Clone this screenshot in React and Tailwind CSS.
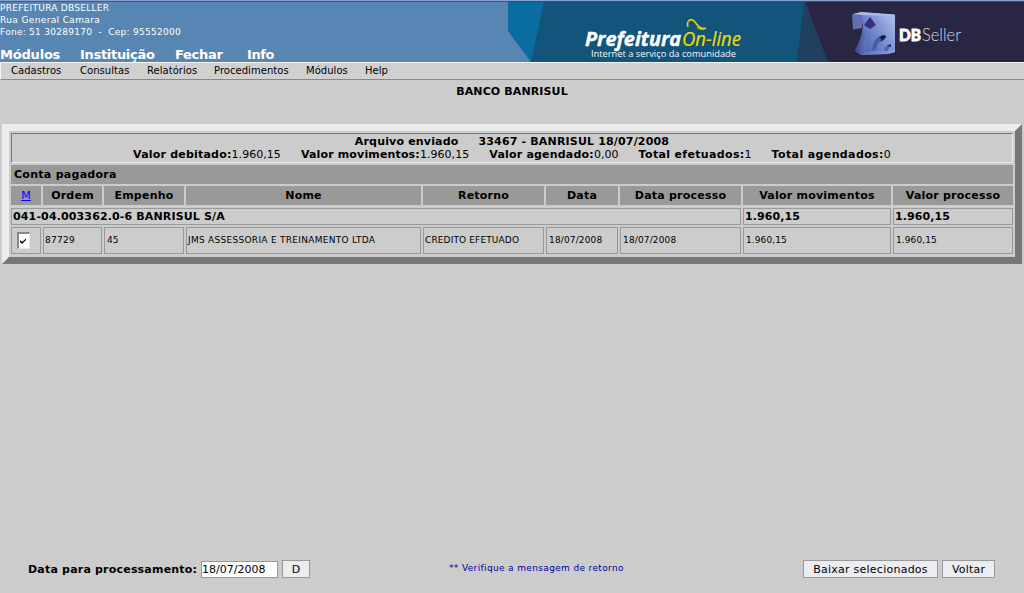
const Header = () => (
  <header className="flex h-[62px] w-full bg-[#5786b2] border-t border-[#8aa0d0]">
    <div className="flex w-[508px] flex-col border-t border-[#43558c] text-white">
      <div className="h-[45px] shrink-0 text-[9px] leading-[12px]">
        <p className="tracking-[0.27px]">PREFEITURA DBSELLER</p>
        <p className="tracking-[0.37px]">Rua General Camara</p>
        <p className="whitespace-pre tracking-[0.27px]">Fone: 51 30289170  -  Cep: 95552000</p>
      </div>
      <nav className="flex h-[15px] text-[13px] font-bold leading-[16px] tracking-[-0.1px]">
        <span className="w-[80px] tracking-[-0.2px]">Módulos</span>
        <span className="w-[95px] tracking-[-0.3px]">Instituição</span>
        <span className="w-[72px] tracking-[-0.3px]">Fechar</span>
        <span className="tracking-[-0.4px]">Info</span>
      </nav>
    </div>
    <svg width="516" height="61" viewBox="508 1 516 61" className="block">
      <rect x="508" y="1" width="516" height="61" fill="#13547b" />
      <path d="M508 1H544L531 62L508 31Z" fill="#096e9f" />
      <path d="M508 31L531 62H508Z" fill="#5786b2" />
      <path d="M805 1H1024V62H797Z" fill="#282643" />
      <path d="M805 1L828 62H797Z" fill="#21405f" />
      <path d="M508 1.5H1024" stroke="#43456c" />
      <text x="585" y="45.500" fontFamily="Open Sans" fontSize="20" fontWeight="700" fontStyle="italic" fill="#fff" stroke="#fff" strokeWidth="0.400" textLength="96" lengthAdjust="spacingAndGlyphs">Prefeitura</text>
      <text x="682" y="45.500" fontFamily="Open Sans" fontSize="20.500" fontStyle="italic" fill="#f0dc00" stroke="#f0dc00" strokeWidth="0.200" textLength="59" lengthAdjust="spacingAndGlyphs">On-line</text>
      <path d="M688 27C686 21 691 17 695 22C699 28 702 30 706 28" fill="none" stroke="#e8d500" strokeWidth="1.600" />
      <path d="M697 27.500Q701 31 706 28.500" fill="none" stroke="#e8d500" strokeWidth="1" />
      <text x="591" y="56.500" fontFamily="Open Sans" fontSize="9.500" fontWeight="500" fill="#f4f8fb" textLength="145" lengthAdjust="spacingAndGlyphs">Internet a serviço da comunidade</text>
      <defs>
        <linearGradient id="front" x1="0" x2="1" y1="0.9" y2="0.2">
          <stop offset="0" stopColor="#4354a6" />
          <stop offset="0.5" stopColor="#6f83cb" />
          <stop offset="1" stopColor="#a9baea" />
        </linearGradient>
        <linearGradient id="side" x1="0" x2="1">
          <stop offset="0" stopColor="#3c468a" />
          <stop offset="1" stopColor="#6679c4" />
        </linearGradient>
        <linearGradient id="base" x1="0" x2="1">
          <stop offset="0" stopColor="#5a6cba" />
          <stop offset="1" stopColor="#8ea2dc" />
        </linearGradient>
      </defs>
      <path d="M861 12L895 15V52L888 54L861 55L855 51Q861 40 863 28Z" fill="url(#front)" />
      <path d="M852 14.500L862 12V28L853 29.500Z" fill="#626fb5" />
      <path d="M853 14L861 12L895 14.500V16L862 15Z" fill="#aebbe8" />
      <path d="M862 28L867 37L865 54L861 55L855 50Q863 38 862 28Z" fill="url(#side)" />
      <path d="M865 52L895 50V52L888 54L861 55Z" fill="url(#base)" />
      <path d="M870 17L876 25L870 29L864 25Z" fill="#35307c" />
      <path d="M872 50Q873 37 883 35L886 36Q877 42 876 50Z" fill="#4b5ca6" />
      <path d="M879 38Q882 34 886 36Q886 39 880 42Q883 38 879 38Z" fill="#191b43" />
      <path d="M884 51Q885 45 891 44Q888 47 888 51Z" fill="#5565ad" />
      <path d="M887 46L891 44V47Z" fill="#252854" />
      <text x="899" y="41" fontFamily="Lato" fontSize="17.500" fontWeight="900" fill="#fff" stroke="#fff" strokeWidth="0.800" textLength="22" lengthAdjust="spacingAndGlyphs">DB</text>
      <text x="922" y="41" fontFamily="Lato" fontSize="18" fontWeight="300" fill="#d5d7e8" textLength="39" lengthAdjust="spacingAndGlyphs">Seller</text>
    </svg>
  </header>
);

const menus = [
  ["Cadastros", "w-[69px]"],
  ["Consultas", "w-[67px]"],
  ["Relatórios", "w-[67px]"],
  ["Procedimentos", "w-[92px]"],
  ["Módulos", "w-[59px]"],
  ["Help", ""],
];

const columns = ["M", "Ordem", "Empenho", "Nome", "Retorno", "Data", "Data processo", "Valor movimentos", "Valor processo"];
const record = [
  ["87729", "pl-px tracking-[0.3px]"],
  ["45", "pl-[2px]"],
  ["JMS ASSESSORIA E TREINAMENTO LTDA", "pl-px tracking-[0.28px]"],
  ["CREDITO EFETUADO", "pl-px tracking-[0.13px]"],
  ["18/07/2008", "pl-[2px] tracking-[0.15px]"],
  ["18/07/2008", "pl-[2px] tracking-[0.15px]"],
  ["1.960,15", "pl-[2px] tracking-[0.1px]"],
  ["1.960,15", "pl-[2px] tracking-[0.1px]"],
];
const totals = [
  ["Valor debitado:", "1.960,15", "tracking-[0.2px]"],
  ["Valor movimentos:", "1.960,15", "tracking-[0.15px]"],
  ["Valor agendado:", "0,00", "tracking-[0.2px]"],
  ["Total efetuados:", "1", "tracking-[0.34px]"],
  ["Total agendados:", "0", "tracking-[0.38px]"],
];
const grid = "grid grid-cols-[30px_59px_80px_235px_121px_72px_121px_148px_120px] gap-x-[2px]";

const Button = ({ children, size }) => (
  <button className={`${size} h-[18px] border border-[#999] bg-[#ebedf2] pt-px leading-[15px]`}>{children}</button>
);

export default function App() {
  return (
    <div className="flex h-[593px] w-[1024px] flex-col overflow-hidden whitespace-nowrap bg-[#ccc] font-['DejaVu_Sans',sans-serif] text-[11px] leading-[13px] text-black">
      <Header />
      <nav className="flex h-[18px] border-y border-l border-t-[#f4f4f4] border-l-[#f4f4f4] border-b-[#888] bg-[#d0d0d0] pl-[10px] text-[10px] leading-[16px] tracking-[0.04px]">
        {menus.map(([name, width]) => (
          <span key={name} className={width}>{name}</span>
        ))}
      </nav>
      <h1 className="h-[44px] pt-[5px] text-center text-[11px] font-bold tracking-[0.12px]">BANCO BANRISUL</h1>

      <section className="mx-[2px] h-[140px] border-[7px] border-t-[#ececec] border-l-[#ececec] border-r-[#777] border-b-[#777] p-[2px]">
        <div className="h-[30px] border border-t-[#777] border-l-[#777] border-r-[#ececec] border-b-[#ececec] pt-px">
          <p className="whitespace-pre text-center font-bold tracking-[0.17px]">
            Arquivo enviado<span className="ml-[20px]">33467 - BANRISUL 18/07/2008</span>
          </p>
          <p className="flex justify-center gap-[20px]">
            {totals.map(([label, value, tracking]) => (
              <span key={label} className="tracking-[0.05px]"><b className={tracking}>{label}</b>{value}</span>
            ))}
          </p>
        </div>
        <div className="mt-[2px] h-[19px] bg-[#999] pl-[3px] font-bold leading-[19px] tracking-[0.28px]">Conta pagadora</div>
        <div className={`${grid} mt-[2px] h-[19px] text-center font-bold leading-[19px] tracking-[0.22px]`}>
          {columns.map((name, i) => (
            <div key={name} className="bg-[#999]">
              {i === 0 ? <a href="#" className="font-normal text-[#00f] underline">{name}</a> : name}
            </div>
          ))}
        </div>
        <div className={`${grid} mt-[3px] h-[17px] font-bold leading-[15px]`}>
          <div className="col-span-7 border border-[#999] pl-px tracking-[0.14px]">041-04.003362.0-6 BANRISUL S/A</div>
          <div className="border border-[#999] pl-px tracking-[0.08px]">1.960,15</div>
          <div className="border border-[#999] pl-px tracking-[0.08px]">1.960,15</div>
        </div>
        <div className={`${grid} mt-[2px] h-[27px] text-[9px] leading-[24px]`}>
          <div className="border border-[#999] pt-[4px] pl-[5px]">
            <div className="h-[17px] w-[13px] border-t-2 border-l-2 border-r border-b border-t-[#888] border-l-[#888] border-r-[#e8e8e8] border-b-[#e8e8e8] bg-white">
              <svg width="10" height="14" viewBox="0 0 10 14" className="block">
                <path d="M1 6V8L3 10L7 6V4.500L3 8Z" fill="#000" />
              </svg>
            </div>
          </div>
          {record.map(([value, style], i) => (
            <div key={i} className={`border border-[#999] ${style}`}>{value}</div>
          ))}
        </div>
      </section>

      <footer className="mt-auto flex h-[33px] items-start pl-[28px] pr-[29px]">
        <b className="w-[173px] pt-[3px] tracking-[0.2px]">Data para processamento:</b>
        <input readOnly defaultValue="18/07/2008" className="mt-px h-[17px] w-[77px] border border-[#999] bg-white leading-[15px] outline-none" />
        <div className="ml-[4px] flex"><Button size="w-[28px]">D</Button></div>
        <span className="ml-[139px] pt-[3px] text-[9px] leading-[11px] tracking-[0.35px] text-[#000099]">** Verifique a mensagem de retorno</span>
        <div className="ml-auto flex gap-[4px]">
          <Button size="w-[135px] tracking-[0.25px]">Baixar selecionados</Button>
          <Button size="w-[53px] tracking-[0.2px]">Voltar</Button>
        </div>
      </footer>
    </div>
  );
}
